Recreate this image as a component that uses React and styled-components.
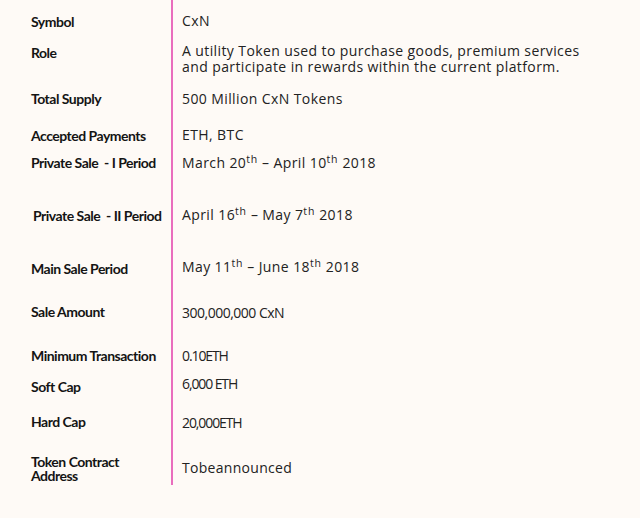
import React from "react";
import styled, { createGlobalStyle } from "styled-components";

const GlobalStyle = createGlobalStyle`
  html, body {
    margin: 0;
    padding: 0;
    background: #fefaf6;
  }
  body {
    font-family: "Open Sans", Lato, sans-serif;
  }
`;

const Page = styled.div`
  width: 640px;
  height: 518px;
  background: #fefaf6;
  overflow: hidden;
`;

const Table = styled.div`
  display: flex;
  flex-direction: column;
  padding-left: 31px;
`;

const Row = styled.div`
  display: grid;
  grid-template-columns: 140px 1fr;
  height: ${(p) => p.$h}px;
`;

const Label = styled.div`
  padding-top: ${(p) => p.$pt}px;
  padding-left: ${(p) => p.$pl || 0}px;
  font-family: Lato, sans-serif;
  font-weight: 700;
  font-size: 14px;
  line-height: 14px;
  letter-spacing: -0.5px;
  color: #141414;
  white-space: pre;
`;

const Value = styled.div`
  border-left: 2px solid #e96dbd;
  padding-left: 9px;
  padding-top: ${(p) => p.$pt}px;
  font-family: "Open Sans", sans-serif;
  font-weight: 400;
  font-size: 14px;
  line-height: 16px;
  letter-spacing: ${(p) => (p.$ls === undefined ? 0.4 : p.$ls)}px;
  color: #222222;
  white-space: nowrap;
`;

const Sup = styled.sup`
  font-size: 10.5px;
  line-height: 0;
  vertical-align: 5px;
  letter-spacing: 0.8px;
`;

const rows = [
  { h: 40, lp: 15, vp: 13, label: "Symbol", value: "CxN" },
  {
    h: 46,
    lp: 6,
    vp: 3,
    label: "Role",
    value: (
      <>
        A utility Token used to purchase goods, premium services
        <br />
        and participate in rewards within the current platform.
      </>
    ),
  },
  { h: 36, lp: 6, vp: 5, label: "Total Supply", value: "500 Million CxN Tokens" },
  { h: 28, lp: 7, vp: 5, label: "Accepted Payments", value: "ETH, BTC" },
  {
    h: 46,
    lp: 6,
    vp: 5,
    label: "Private Sale  - I Period",
    value: (
      <>
        March 20<Sup>th</Sup> – April 10<Sup>th</Sup> 2018
      </>
    ),
  },
  {
    h: 54,
    lp: 13,
    vp: 11,
    pl: 2,
    label: "Private Sale  - II Period",
    value: (
      <>
        April 16<Sup>th</Sup> – May 7<Sup>th</Sup> 2018
      </>
    ),
  },
  {
    h: 46,
    lp: 12,
    vp: 9,
    label: "Main Sale Period",
    value: (
      <>
        May 11<Sup>th</Sup> – June 18<Sup>th</Sup> 2018
      </>
    ),
  },
  { h: 44, lp: 9, vp: 9, ls: -0.5, label: "Sale Amount", value: "300,000,000 CxN" },
  { h: 32, lp: 9, vp: 8, ls: -1.1, label: "Minimum Transaction", value: "0.10ETH" },
  { h: 34, lp: 8, vp: 4, ls: -1.1, label: "Soft Cap", value: "6,000 ETH" },
  { h: 38, lp: 9, vp: 9, ls: -1.1, label: "Hard Cap", value: "20,000ETH" },
  {
    h: 41,
    lp: 11,
    vp: 16,
    ls: 0.3,
    label: "Token Contract\nAddress",
    value: "Tobeannounced",
  },
];

export default function App() {
  return (
    <Page>
      <GlobalStyle />
      <Table>
        {rows.map((r, i) => (
          <Row key={i} $h={r.h}>
            <Label $pt={r.lp} $pl={r.pl}>{r.label}</Label>
            <Value $pt={r.vp} $ls={r.ls}>{r.value}</Value>
          </Row>
        ))}
      </Table>
    </Page>
  );
}
